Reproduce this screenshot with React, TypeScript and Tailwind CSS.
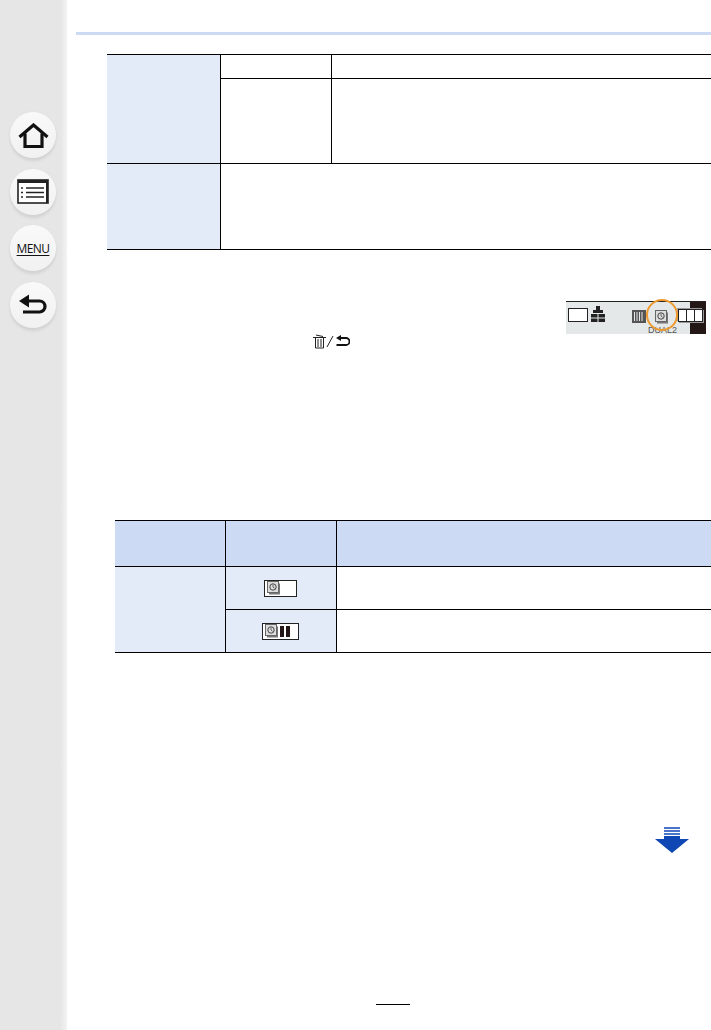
const NavButton = ({ children }: { children: React.ReactNode }) => (
  <button className="w-[46px] h-[46px] rounded-full bg-gradient-to-b from-[#f9f9f9] to-[#f1f1f1] shadow-[0_3px_3px_#d2d2d2,0_0_2px_#dcdcdc] flex items-center justify-center">
    {children}
  </button>
);

function Sidebar() {
  return (
    <div className="w-[67px] shrink-0 bg-gradient-to-r from-[#e6e6e6] from-90% to-[#f2f2f2] flex flex-col items-center gap-[10.5px] pt-[112px] pr-[1px]">
      <NavButton>
        <svg width="31" height="25" viewBox="0 0 31 25" fill="none" stroke="#111" strokeWidth="3.2">
          <path d="M1.500 14 15.500 2l14 12" />
          <path d="M7 10.500V23.500h17V10.500" />
        </svg>
      </NavButton>
      <NavButton>
        <svg width="32" height="25" viewBox="0 0 32 25">
          <rect x="1" y="1" width="30" height="23" fill="#fff" stroke="#222" strokeWidth="1.600" />
          <rect x="1" y="1" width="30" height="3" fill="#222" />
          <rect x="29" y="1" width="2" height="23" fill="#222" />
          <path d="M9 9h18M9 13.500h18M9 18h18M4 9h2M4 13.500h2M4 18h2" stroke="#222" strokeWidth="1.300" />
        </svg>
      </NavButton>
      <NavButton>
        <span className="font-['Open_Sans',sans-serif] text-[12px] leading-[13px] font-medium tracking-[-0.6px] text-[#111] underline underline-offset-2">MENU</span>
      </NavButton>
      <NavButton>
        <svg width="30" height="21" viewBox="0 0 30 21" fill="none">
          <path d="M9 7h12.500a5.500 5.500 0 0 1 0 11H5" stroke="#111" strokeWidth="3.200" />
          <path d="M11 0.500v13L1 7z" fill="#111" />
        </svg>
      </NavButton>
    </div>
  );
}

function TimerGlyph() {
  return (
    <svg width="13" height="14" viewBox="0 0 13 14" className="shrink-0">
      <rect x="2" y="2.500" width="11" height="11" fill="#777" />
      <rect x="0.500" y="0.500" width="11" height="11" fill="#ddd" stroke="#666" />
      <circle cx="6" cy="6" r="3.200" fill="none" stroke="#444" />
      <path d="M6 3.800V6l1.600 1.300" fill="none" stroke="#444" strokeWidth="0.800" />
    </svg>
  );
}

function CameraStrip() {
  return (
    <div className="relative w-[140px] h-[33px] bg-[#e4e8e9] border-t border-[#222] flex items-start">
      <div className="ml-[2px] mt-[6px] w-[20px] h-[14px] bg-white border border-[#222]" />
      <svg className="ml-[3px] mt-[4px]" width="14" height="16" viewBox="0 0 14 16">
        <path d="M5 0h4v4h3v3H2V4h3zM0 8h6.500v3.500H0zM7.500 8H14v3.500H7.500zM0 12.500h6.500V16H0zM7.500 12.500H14V16H7.500z" fill="#222" />
      </svg>
      <svg className="ml-[27px] mt-[8px]" width="14" height="13" viewBox="0 0 14 13">
        <rect width="14" height="13" fill="#555" />
        <path d="M2.500 2v9M5 2v9M7.500 2v9M10 2v9" stroke="#e4e8e9" strokeWidth="1" />
      </svg>
      <div className="ml-[9px] mt-[8px]"><TimerGlyph /></div>
      <div className="ml-auto w-[16px] h-full bg-[#231815]" />
      <div className="absolute left-[112px] top-[7px] flex w-[25px] h-[13px] border border-[#222] bg-white shadow-[1px_1px_0_#999,-1px_-1px_0_#999]">
        <div className="flex-1 border-r border-[#222]" />
        <div className="flex-1 border-r border-[#222]" />
        <div className="flex-1" />
      </div>
      <span className="absolute left-[82px] top-[24px] text-[9px] leading-[8px] font-['Liberation_Sans',sans-serif] text-[#555]">DUAL2</span>
      <div className="absolute left-[80px] top-[-3px] w-[32px] h-[32px] rounded-full border-2 border-[#ee9a2e]" />
    </div>
  );
}

function FirstTable() {
  const cell = 'border-black';
  return (
    <table className="w-[604px] table-fixed border-collapse border-y border-black">
      <colgroup>
        <col className="w-[113px]" />
        <col className="w-[111px]" />
        <col />
      </colgroup>
      <tbody>
        <tr className="h-[24px]">
          <td rowSpan={2} className={`bg-[#e4ebf8] border-b ${cell}`} />
          <td className={`border-l border-b ${cell}`} />
          <td className={`border-l border-b ${cell}`} />
        </tr>
        <tr className="h-[85px]">
          <td className={`border-l border-b ${cell}`} />
          <td className={`border-l border-b ${cell}`} />
        </tr>
        <tr className="h-[86px]">
          <td className="bg-[#e4ebf8]" />
          <td colSpan={2} className={`border-l ${cell}`} />
        </tr>
      </tbody>
    </table>
  );
}

function SecondTable() {
  const cell = 'border-black';
  return (
    <table className="ml-[39px] w-[596px] table-fixed border-collapse border-y border-black">
      <colgroup>
        <col className="w-[110px]" />
        <col className="w-[111px]" />
        <col />
      </colgroup>
      <tbody>
        <tr className="h-[46px] bg-[#cddaf3]">
          <td />
          <td className={`border-l ${cell}`} />
          <td className={`border-l ${cell}`} />
        </tr>
        <tr className="h-[43px]">
          <td rowSpan={2} className={`bg-[#e4ebf8] border-t ${cell}`} />
          <td className={`bg-[#e4ebf8] border-t border-l ${cell}`}>
            <div className="mx-auto w-[33px] h-[17px] border border-[#222] bg-white flex items-center pl-[2px]">
              <TimerGlyph />
            </div>
          </td>
          <td className={`border-t border-l ${cell}`} />
        </tr>
        <tr className="h-[43px]">
          <td className={`bg-[#e4ebf8] border-t border-l ${cell}`}>
            <div className="mx-auto w-[37px] h-[17px] border border-[#222] bg-white flex items-center pl-[2px] gap-[1px]">
              <TimerGlyph />
              <div className="ml-[1px] w-[4px] h-[11px] bg-[#231815]" />
              <div className="ml-[1px] w-[4px] h-[11px] bg-[#231815]" />
            </div>
          </td>
          <td className={`border-t border-l ${cell}`} />
        </tr>
      </tbody>
    </table>
  );
}

export default function App() {
  return (
    <div className="w-[711px] h-[1030px] overflow-hidden bg-white flex font-['Liberation_Sans',sans-serif]">
      <Sidebar />
      <main className="flex-1 min-w-0 pl-[9px] pt-[32px] flex flex-col">
        <div className="h-[3px] bg-[#cddaf3]" />
        <div className="mt-[19px] pl-[31px]">
          <FirstTable />
        </div>
        <div className="mt-[51px] flex justify-end pr-[5px]">
          <CameraStrip />
        </div>
        <div className="mt-[-2px] ml-[237px] flex items-center h-[18px]">
          <svg width="13" height="15" viewBox="0 0 13 15" fill="none" stroke="#222">
            <path d="M0 3.500h13M3 1l7 1.500" />
            <path d="M2.500 4v10h8V4M5 5v8M8 5v8" />
          </svg>
          <svg width="8" height="13" viewBox="0 0 8 13" stroke="#222" fill="none">
            <path d="M7 1 1 12" />
          </svg>
          <svg className="ml-[1px]" width="15" height="12" viewBox="0 0 15 12" fill="none">
            <path d="M5 3h6a3.500 3.500 0 0 1 0 7H1.500" stroke="#111" strokeWidth="1.800" />
            <path d="M6 0v6L1 3z" fill="#111" />
          </svg>
        </div>
        <div className="mt-[170px]">
          <SecondTable />
        </div>
        <div className="mt-[174px] flex justify-end pr-[22px]">
          <svg width="34" height="26" viewBox="0 0 34 26">
            <path d="M9 1h16M9 4h16M9 7h16" stroke="#0f47b5" strokeWidth="1.500" />
            <path d="M9 9h16v3h9L17 26 0 12h9z" fill="#0f47b5" />
          </svg>
        </div>
        <div className="mt-[151px] ml-[300px] w-[34px] h-[1px] bg-black" />
      </main>
    </div>
  );
}
